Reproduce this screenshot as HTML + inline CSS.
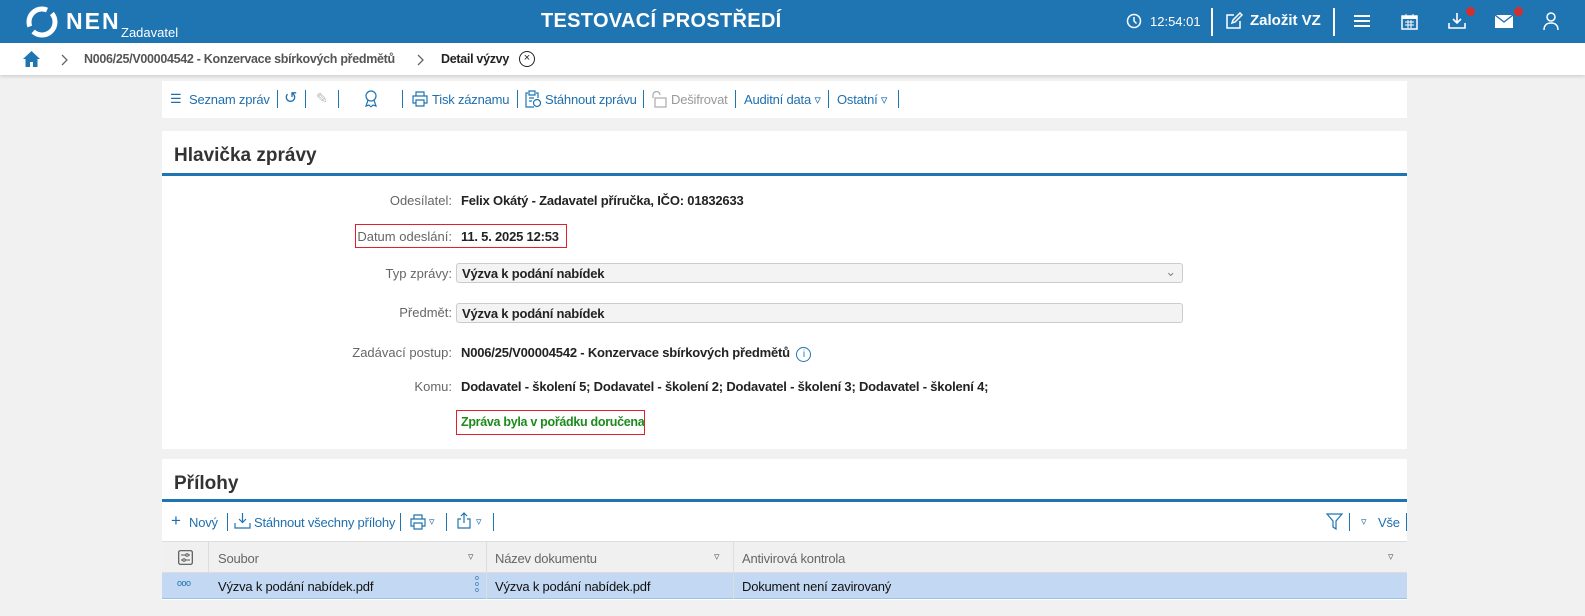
<!DOCTYPE html>
<html><head><meta charset="utf-8"><style>
*{box-sizing:border-box;margin:0;padding:0}
body{width:1585px;height:616px;background:#f1f1f1;font-family:"Liberation Sans",sans-serif;position:relative;overflow:hidden;font-size:13px;color:#222}
.abs{position:absolute;white-space:nowrap}
.top{left:0;top:0;width:1585px;height:43px;background:#1f74b2;color:#fff}
.bc{left:0;top:43px;width:1585px;height:32px;background:#fff;box-shadow:0 2px 3px rgba(0,0,0,.12)}
.panel{background:#fff;left:162px;width:1245px}
.blue{color:#1f6fae}
.s{position:absolute;width:1px;height:18px;background:#1f74b2}
.lbl{position:absolute;color:#666;font-size:13px;text-align:right;white-space:nowrap;right:1133px}
.val{position:absolute;left:461px;font-weight:bold;font-size:13px;white-space:nowrap;letter-spacing:-.2px}
.inp{position:absolute;left:456px;width:727px;height:20px;border:1px solid #ccc;border-radius:3px;background:#f3f3f3;font-weight:bold;padding:2px 5px;font-size:13px;letter-spacing:-.2px}
.t{font-size:13px;letter-spacing:-.2px}
</style></head><body>
<div class="abs top">
 <svg class="abs" style="left:26px;top:6px" width="32" height="32" viewBox="0 0 32 32"><circle cx="16" cy="16" r="13" fill="none" stroke="#fff" stroke-width="5" stroke-dasharray="30 6 30 6"/></svg>
 <div class="abs" style="left:66px;top:8px;font-size:23px;font-weight:bold;letter-spacing:2px">NEN</div>
 <div class="abs" style="left:121px;top:25px;font-size:13px">Zadavatel</div>
 <div class="abs" style="left:541px;top:10px;font-size:20px;font-weight:bold;letter-spacing:.3px">TESTOVACÍ PROSTŘEDÍ</div>
 <svg class="abs" style="left:1126px;top:13px" width="16" height="16" viewBox="0 0 16 16"><circle cx="8" cy="8" r="6.5" fill="none" stroke="#fff" stroke-width="1.5"/><path d="M8 4v4l2.5 2.5" stroke="#fff" stroke-width="1.5" fill="none"/></svg>
 <div class="abs" style="left:1150px;top:14px;font-size:13px">12:54:01</div>
 <div class="abs" style="left:1211px;top:8px;width:2px;height:28px;background:#fff"></div>
 <svg class="abs" style="left:1225px;top:12px" width="18" height="18" viewBox="0 0 18 18"><path d="M9 3H2v13h13V9M7 11l1-3 7-7 2 2-7 7z" fill="none" stroke="#fff" stroke-width="1.5"/></svg>
 <div class="abs" style="left:1250px;top:12px;font-size:15px;font-weight:bold">Založit VZ</div>
 <div class="abs" style="left:1333px;top:8px;width:2px;height:28px;background:#fff"></div>
 <div class="abs" style="left:1354px;top:15px;width:16px;height:2px;background:#fff;box-shadow:0 5px 0 #fff,0 10px 0 #fff"></div>
 <svg class="abs" style="left:1401px;top:13px" width="17" height="17" viewBox="0 0 17 17"><rect x="1" y="3" width="15" height="13" fill="none" stroke="#fff" stroke-width="1.5"/><rect x="1" y="3" width="15" height="3" fill="#fff"/><path d="M5 1v4M12 1v4M4 9h9M4 12h9M7 7v8M10 7v8" stroke="#fff"/></svg>
 <svg class="abs" style="left:1448px;top:12px" width="18" height="18" viewBox="0 0 18 18"><path d="M9 1v10M5 7l4 4 4-4M1 11v5h16v-5" fill="none" stroke="#fff" stroke-width="1.6"/></svg>
 <div class="abs" style="left:1466px;top:7px;width:9px;height:9px;border-radius:50%;background:#d32f2f"></div>
 <svg class="abs" style="left:1495px;top:15px" width="18" height="13" viewBox="0 0 18 13"><rect width="18" height="13" fill="#fff"/><path d="M0 0l9 7 9-7" fill="none" stroke="#1f74b2" stroke-width="1.3"/></svg>
 <div class="abs" style="left:1514px;top:7px;width:9px;height:9px;border-radius:50%;background:#d32f2f"></div>
 <svg class="abs" style="left:1543px;top:12px" width="16" height="18" viewBox="0 0 16 18"><circle cx="8" cy="5" r="4" fill="none" stroke="#fff" stroke-width="1.5"/><path d="M1 18c0-5 3-7 7-7s7 2 7 7" fill="none" stroke="#fff" stroke-width="1.5"/></svg>
</div>
<div class="abs bc">
 <svg class="abs" style="left:23px;top:8px" width="17" height="16" viewBox="0 0 17 16"><path d="M8.5 0L0 8h2.5v8h4.5v-5h3v5h4.5V8H17z" fill="#1f74b2"/></svg>
 <svg class="abs" style="left:61px;top:11px" width="8" height="12" viewBox="0 0 8 12"><path d="M1 1l5 5-5 5" fill="none" stroke="#666" stroke-width="1.3"/></svg>
 <div class="abs" style="left:84px;top:9px;font-weight:bold;color:#555;font-size:12.5px;letter-spacing:-.3px">N006/25/V00004542 - Konzervace sbírkových předmětů</div>
 <svg class="abs" style="left:417px;top:11px" width="8" height="12" viewBox="0 0 8 12"><path d="M1 1l5 5-5 5" fill="none" stroke="#666" stroke-width="1.3"/></svg>
 <div class="abs" style="left:441px;top:9px;font-weight:bold;font-size:12.5px;letter-spacing:-.3px">Detail výzvy</div>
 <div class="abs" style="left:519px;top:8px;width:16px;height:16px;border:1.3px solid #222;border-radius:50%;font-size:11px;text-align:center;line-height:13px">×</div>
</div>
<div class="abs panel" style="top:81px;height:37px"></div>
<div class="abs blue t" style="left:170px;top:91px">☰</div><div class="abs blue t" style="left:189px;top:92px">Seznam zpráv</div><div class="s" style="left:277px;top:90px"></div>
<div class="abs blue" style="left:284px;top:88px;font-size:16px">↺</div><div class="s" style="left:305px;top:90px"></div>
<div class="abs" style="left:316px;top:90px;color:#bbb;font-size:14px">✎</div><div class="s" style="left:338px;top:90px"></div>
<svg class="abs" style="left:364px;top:90px" width="14" height="18" viewBox="0 0 14 18"><circle cx="7" cy="6" r="5" fill="none" stroke="#1f74b2" stroke-width="1.2"/><path d="M4 10l-2 6 3-1 2 2M10 10l2 6-3-1-2 2" fill="none" stroke="#1f74b2" stroke-width="1.2"/></svg>
<div class="s" style="left:402px;top:90px"></div>
<svg class="abs" style="left:412px;top:91px" width="16" height="16" viewBox="0 0 16 16"><path d="M4 5V1h8v4M4 12H1V5h14v7h-3M4 9h8v6H4z" fill="none" stroke="#1f74b2" stroke-width="1.2"/></svg>
<div class="abs blue t" style="left:432px;top:92px">Tisk záznamu</div><div class="s" style="left:517px;top:90px"></div>
<svg class="abs" style="left:525px;top:90px" width="16" height="18" viewBox="0 0 16 18"><path d="M3 3H1v14h8M11 3h2v5M4 1h6v4H4zM4 8h5M4 11h3" fill="none" stroke="#1f74b2" stroke-width="1.2"/><circle cx="12" cy="13" r="3.5" fill="none" stroke="#1f74b2" stroke-width="1.2"/></svg>
<div class="abs blue t" style="left:545px;top:92px">Stáhnout zprávu</div><div class="s" style="left:643px;top:90px"></div>
<svg class="abs" style="left:651px;top:90px" width="16" height="18" viewBox="0 0 16 18"><path d="M2 8V5a3.5 3.5 0 0 1 7 0" fill="none" stroke="#aaa" stroke-width="1.2"/><rect x="4" y="8" width="11" height="9" fill="none" stroke="#aaa" stroke-width="1.2"/></svg>
<div class="abs t" style="left:671px;top:92px;color:#999">Dešifrovat</div><div class="s" style="left:735px;top:90px"></div>
<div class="abs blue t" style="left:744px;top:92px">Auditní data ▿</div><div class="s" style="left:828px;top:90px"></div>
<div class="abs blue t" style="left:837px;top:92px">Ostatní ▿</div><div class="s" style="left:898px;top:90px"></div>

<div class="abs panel" style="top:131px;height:318px">
 <div class="abs" style="left:12px;top:14px;font-size:19px;font-weight:bold;color:#333">Hlavička zprávy</div>
 <div class="abs" style="left:0;top:42px;width:1245px;height:3px;background:#1f74b2"></div>
</div>
<div class="lbl" style="top:193px">Odesílatel:</div><div class="val" style="top:193px">Felix Okátý - Zadavatel příručka, IČO: 01832633</div>
<div class="abs" style="left:355px;top:224px;width:212px;height:24px;border:1px solid #e0202a"></div>
<div class="lbl" style="top:229px">Datum odeslání:</div><div class="val" style="top:229px">11. 5. 2025 12:53</div>
<div class="lbl" style="top:266px">Typ zprávy:</div><div class="inp" style="top:263px">Výzva k podání nabídek<span style="position:absolute;right:6px;top:0;color:#888;font-weight:normal">⌄</span></div>
<div class="lbl" style="top:305px">Předmět:</div><div class="inp" style="top:303px">Výzva k podání nabídek</div>
<div class="lbl" style="top:345px">Zadávací postup:</div><div class="val" style="top:345px">N006/25/V00004542 - Konzervace sbírkových předmětů <span style="display:inline-block;width:15px;height:15px;border:1.2px solid #1f74b2;border-radius:50%;color:#1f74b2;font-size:10px;text-align:center;line-height:13px;font-weight:normal;margin-left:3px">i</span></div>
<div class="lbl" style="top:379px">Komu:</div><div class="val" style="top:379px">Dodavatel - školení 5; Dodavatel - školení 2; Dodavatel - školení 3; Dodavatel - školení 4;</div>
<div class="abs" style="left:456px;top:410px;width:189px;height:25px;border:1px solid #e0202a;color:#1c8a1c;font-weight:bold;padding:4px 0 0 4px;font-size:12.5px;letter-spacing:-.3px">Zpráva byla v pořádku doručena</div>

<div class="abs panel" style="top:459px;height:141px">
 <div class="abs" style="left:12px;top:14px;font-size:19px;font-weight:bold;color:#333">Přílohy</div>
 <div class="abs" style="left:0;top:40px;width:1245px;height:3px;background:#1f74b2"></div>
 <div class="abs" style="left:0;top:82px;width:1245px;height:32px;background:#f0f0f0;border-top:1px solid #ddd;border-bottom:1px solid #ddd;color:#666">
  <svg class="abs" style="left:16px;top:8px" width="15" height="15" viewBox="0 0 15 15"><rect x=".7" y=".7" width="13.6" height="13.6" rx="1.5" fill="none" stroke="#555" stroke-width="1.2"/><path d="M3 5h9M3 10h9" stroke="#555"/><circle cx="9" cy="5" r="1.3" fill="#fff" stroke="#555"/><circle cx="6" cy="10" r="1.3" fill="#fff" stroke="#555"/></svg>
  <div class="abs" style="left:46px;top:0;width:1px;height:32px;background:#ddd"></div>
  <div class="abs t" style="left:56px;top:9px">Soubor</div><div class="abs" style="left:306px;top:8px;font-size:11px">▿</div>
  <div class="abs" style="left:324px;top:0;width:1px;height:32px;background:#ddd"></div>
  <div class="abs t" style="left:333px;top:9px">Název dokumentu</div><div class="abs" style="left:552px;top:8px;font-size:11px">▿</div>
  <div class="abs" style="left:571px;top:0;width:1px;height:32px;background:#ddd"></div>
  <div class="abs t" style="left:580px;top:9px">Antivirová kontrola</div><div class="abs" style="left:1226px;top:8px;font-size:11px">▿</div>
 </div>
 <div class="abs" style="left:0;top:114px;width:1245px;height:26px;background:#c3d9f3;border-bottom:1px solid #9ec0e6">
  <div class="abs blue" style="left:15px;top:5px;font-size:9px;letter-spacing:-.5px">ooo</div>
  <div class="abs t" style="left:56px;top:6px;color:#111">Výzva k podání nabídek.pdf</div>
  <div class="abs blue" style="left:313px;top:3px;font-size:7px;line-height:6px">o<br>o<br>o</div>
  <div class="abs" style="left:324px;top:0;width:1px;height:26px;background:#ddd"></div>
  <div class="abs t" style="left:333px;top:6px;color:#111">Výzva k podání nabídek.pdf</div>
  <div class="abs" style="left:571px;top:0;width:1px;height:26px;background:#ddd"></div>
  <div class="abs t" style="left:580px;top:6px;color:#111">Dokument není zavirovaný</div>
 </div>
</div>
<div class="abs blue" style="left:171px;top:511px;font-size:17px">+</div><div class="abs blue t" style="left:189px;top:515px">Nový</div><div class="s" style="left:227px;top:513px"></div>
<svg class="abs" style="left:234px;top:512px" width="17" height="17" viewBox="0 0 17 17"><path d="M8.5 1v9M5 7l3.5 3.5L12 7M1 11v5h15v-5" fill="none" stroke="#1f74b2" stroke-width="1.2"/></svg>
<div class="abs blue t" style="left:254px;top:515px">Stáhnout všechny přílohy</div><div class="s" style="left:400px;top:513px"></div>
<svg class="abs" style="left:410px;top:514px" width="16" height="16" viewBox="0 0 16 16"><path d="M4 5V1h8v4M4 12H1V5h14v7h-3M4 9h8v6H4z" fill="none" stroke="#1f74b2" stroke-width="1.2"/></svg>
<div class="abs blue" style="left:429px;top:515px;font-size:11px">▿</div><div class="s" style="left:446px;top:513px"></div>
<svg class="abs" style="left:457px;top:512px" width="14" height="17" viewBox="0 0 14 17"><path d="M7 11V1M4 4l3-3 3 3M4 7H1v9h12V7h-3" fill="none" stroke="#1f74b2" stroke-width="1.2"/></svg>
<div class="abs blue" style="left:476px;top:515px;font-size:11px">▿</div><div class="s" style="left:493px;top:513px"></div>
<svg class="abs" style="left:1326px;top:513px" width="17" height="17" viewBox="0 0 17 17"><path d="M1 1h15l-6 7v8l-3-2V8z" fill="none" stroke="#1f74b2" stroke-width="1.2"/></svg>
<div class="s" style="left:1349px;top:513px"></div>
<div class="abs blue" style="left:1361px;top:515px;font-size:11px">▿</div><div class="abs blue t" style="left:1378px;top:515px">Vše</div><div class="s" style="left:1406px;top:513px"></div>
</body></html>
